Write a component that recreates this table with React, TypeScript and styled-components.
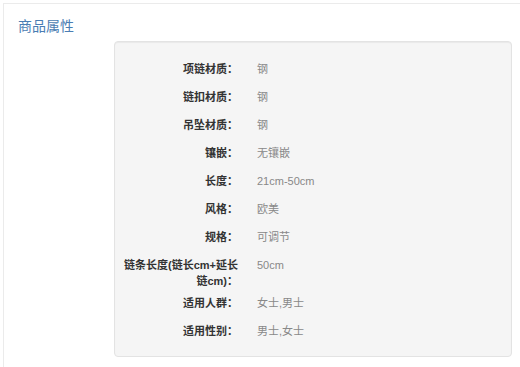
import { createGlobalStyle } from "styled-components";
import styled from "styled-components";

const GlobalStyle = createGlobalStyle`
  html, body {
    margin: 0;
    padding: 0;
    background: #ffffff;
    font-family: "Liberation Sans", "Noto Sans CJK SC", sans-serif;
  }
`;

const SPage = styled.div`
  margin: 3px 0 0 3px;
  border-top: 1px solid #ebebeb;
  border-left: 1px solid #ebebeb;
  padding: 12px 8px 12px 14px;
  min-height: 340px;
  box-sizing: border-box;
`;

const STitle = styled.h3`
  margin: 0;
  font-size: 14px;
  font-weight: normal;
  line-height: 20px;
  color: #4a7db3;
`;

const SWell = styled.div`
  margin: 5px 0 0 96px;
  padding: 13px 0 11px;
  background: #f5f5f5;
  border: 1px solid #e3e3e3;
  border-radius: 4px;
  box-shadow: inset 0 1px 1px rgba(0, 0, 0, 0.05);
`;

const SRow = styled.div`
  display: flex;
  align-items: flex-start;
  box-sizing: border-box;
  min-height: 28px;
  padding-top: 6px;
  font-size: 11px;
  line-height: 16px;
`;

const SLabel = styled.div`
  flex: 0 0 auto;
  box-sizing: border-box;
  width: 123px;
  padding-left: 5px;
  text-align: right;
  font-weight: bold;
  color: #333333;
`;

const SValue = styled.div`
  margin-left: 19px;
  color: #888888;
`;

const props: [string, string][] = [
  ["项链材质", "钢"],
  ["链扣材质", "钢"],
  ["吊坠材质", "钢"],
  ["镶嵌", "无镶嵌"],
  ["长度", "21cm-50cm"],
  ["风格", "欧美"],
  ["规格", "可调节"],
  ["链条长度(链长cm+延长链cm)", "50cm"],
  ["适用人群", "女士,男士"],
  ["适用性别", "男士,女士"],
];

export default function App() {
  return (
    <>
      <GlobalStyle />
      <SPage>
        <STitle>商品属性</STitle>
        <SWell>
          {props.map(([k, v]) => (
            <SRow key={k}>
              <SLabel>{k}：</SLabel>
              <SValue>{v}</SValue>
            </SRow>
          ))}
        </SWell>
      </SPage>
    </>
  );
}
